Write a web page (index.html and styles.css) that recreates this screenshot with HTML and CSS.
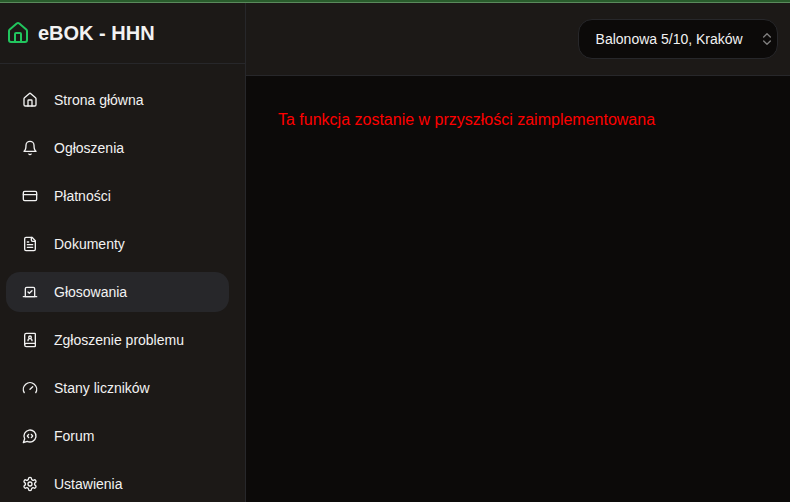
FILE: index.html
```html
<!DOCTYPE html>
<html lang="pl">
<head>
<meta charset="utf-8">
<title>eBOK - HHN</title>
<link rel="stylesheet" href="styles.css">
</head>
<body>
<div class="progress"></div>
<div class="layout">
  <aside class="sidebar">
    <div class="brand">
      <svg class="logo" viewBox="0 0 24 24"><path d="M15 21v-8a1 1 0 0 0-1-1h-4a1 1 0 0 0-1 1v8"/><path d="M3 10a2 2 0 0 1 .709-1.528l7-5.999a2 2 0 0 1 2.582 0l7 5.999A2 2 0 0 1 21 10v9a2 2 0 0 1-2 2H5a2 2 0 0 1-2-2z"/></svg>
      <span>eBOK - HHN</span>
    </div>
    <nav class="menu">
      <a class="item"><svg viewBox="0 0 24 24"><path d="M15 21v-8a1 1 0 0 0-1-1h-4a1 1 0 0 0-1 1v8"/><path d="M3 10a2 2 0 0 1 .709-1.528l7-5.999a2 2 0 0 1 2.582 0l7 5.999A2 2 0 0 1 21 10v9a2 2 0 0 1-2 2H5a2 2 0 0 1-2-2z"/></svg>Strona główna</a>
      <a class="item"><svg viewBox="0 0 24 24"><path d="M6 8a6 6 0 0 1 12 0c0 7 3 9 3 9H3s3-2 3-9"/><path d="M10.3 21a1.94 1.94 0 0 0 3.4 0"/></svg>Ogłoszenia</a>
      <a class="item"><svg viewBox="0 0 24 24"><rect width="20" height="14" x="2" y="5" rx="2"/><path d="M2 10h20"/></svg>Płatności</a>
      <a class="item"><svg viewBox="0 0 24 24"><path d="M15 2H6a2 2 0 0 0-2 2v16a2 2 0 0 0 2 2h12a2 2 0 0 0 2-2V7Z"/><path d="M14 2v4a2 2 0 0 0 2 2h4"/><path d="M10 9H8"/><path d="M16 13H8"/><path d="M16 17H8"/></svg>Dokumenty</a>
      <a class="item active"><svg viewBox="0 0 24 24"><path d="m9 12 2 2 4-4"/><path d="M5 7c0-1.100.9-2 2-2h10a2 2 0 0 1 2 2v12H5V7Z"/><path d="M22 19H2"/></svg>Głosowania</a>
      <a class="item"><svg viewBox="0 0 24 24"><path d="M15 13a3 3 0 1 0-6 0"/><path d="M4 19.500v-15A2.500 2.500 0 0 1 6.500 2H19a1 1 0 0 1 1 1v18a1 1 0 0 1-1 1H6.500a1 1 0 0 1 0-5H20"/><circle cx="12" cy="8" r="2"/></svg>Zgłoszenie problemu</a>
      <a class="item"><svg viewBox="0 0 24 24"><path d="m12 14 4-4"/><path d="M3.340 19a10 10 0 1 1 17.320 0"/></svg>Stany liczników</a>
      <a class="item"><svg viewBox="0 0 24 24"><path d="M10 9.500 8 12l2 2.500"/><path d="m14 9.500 2 2.500-2 2.500"/><path d="M7.900 20A9 9 0 1 0 4 16.100L2 22z"/></svg>Forum</a>
      <a class="item"><svg viewBox="0 0 24 24"><path d="M12.220 2h-.44a2 2 0 0 0-2 2v.18a2 2 0 0 1-1 1.730l-.43.25a2 2 0 0 1-2 0l-.15-.08a2 2 0 0 0-2.730.73l-.22.38a2 2 0 0 0 .73 2.730l.15.1a2 2 0 0 1 1 1.720v.51a2 2 0 0 1-1 1.740l-.15.09a2 2 0 0 0-.73 2.730l.22.38a2 2 0 0 0 2.730.73l.15-.08a2 2 0 0 1 2 0l.43.25a2 2 0 0 1 1 1.730V20a2 2 0 0 0 2 2h.44a2 2 0 0 0 2-2v-.18a2 2 0 0 1 1-1.730l.43-.25a2 2 0 0 1 2 0l.15.08a2 2 0 0 0 2.730-.73l.22-.39a2 2 0 0 0-.73-2.730l-.15-.08a2 2 0 0 1-1-1.740v-.5a2 2 0 0 1 1-1.740l.15-.09a2 2 0 0 0 .73-2.730l-.22-.38a2 2 0 0 0-2.730-.73l-.15.08a2 2 0 0 1-2 0l-.43-.25a2 2 0 0 1-1-1.730V4a2 2 0 0 0-2-2z"/><circle cx="12" cy="12" r="3"/></svg>Ustawienia</a>
    </nav>
  </aside>
  <div class="content">
    <header class="topbar">
      <button class="select" type="button"><span>Balonowa 5/10, Kraków</span><svg viewBox="0 0 24 24"><path d="m7 15 5 5 5-5"/><path d="m7 9 5-5 5 5"/></svg></button>
    </header>
    <main class="main">Ta funkcja zostanie w przyszłości zaimplementowana</main>
  </div>
</div>
</body>
</html>
```
FILE: styles.css
```css
* { box-sizing: border-box; }
body {
  margin: 0;
  height: 502px;
  overflow: hidden;
  display: flex;
  flex-direction: column;
  background: #0c0a09;
  color: #f2f2f2;
  font-family: "Liberation Sans", Arial, sans-serif;
}
svg {
  width: 16px;
  height: 16px;
  flex: none;
  fill: none;
  stroke: currentColor;
  stroke-width: 2;
  stroke-linecap: round;
  stroke-linejoin: round;
}
.progress {
  height: 3px;
  flex: none;
  background: #295c2c;
  border-bottom: 1px solid #5a8a5c;
}
.layout { display: flex; flex: 1; min-height: 0; }
.sidebar {
  width: 246px;
  flex: none;
  background: #1c1917;
  border-right: 1px solid #27272a;
}
.brand {
  height: 61px;
  padding-left: 6px;
  display: flex;
  align-items: center;
  gap: 8px;
  border-bottom: 1px solid #27272a;
  font-size: 20px;
  font-weight: 700;
}
.logo { width: 24px; height: 24px; color: #22c55e; }
.menu {
  display: flex;
  flex-direction: column;
  gap: 8px;
  padding: 16px 16px 0 6px;
}
.item {
  height: 40px;
  flex: none;
  padding: 0 16px;
  display: flex;
  align-items: center;
  gap: 16px;
  border-radius: 14px;
  font-size: 14px;
  line-height: 20px;
}
.active { background: #27272a; }
.content { flex: 1; min-width: 0; }
.topbar {
  height: 73px;
  padding: 0 12px;
  display: flex;
  align-items: center;
  justify-content: flex-end;
  background: #1c1917;
  border-bottom: 1px solid #27272a;
}
.select {
  width: 200px;
  height: 40px;
  padding: 0 2px 0 16.6px;
  display: flex;
  align-items: center;
  justify-content: space-between;
  background: #0c0a09;
  border: 1px solid #27272a;
  border-radius: 14px;
  color: inherit;
  font: 14px/20px "Liberation Sans", Arial, sans-serif;
}
.select svg { opacity: .5; }
.main {
  padding: 32px;
  color: #f00;
  font-size: 16px;
  line-height: 24px;
}
```
